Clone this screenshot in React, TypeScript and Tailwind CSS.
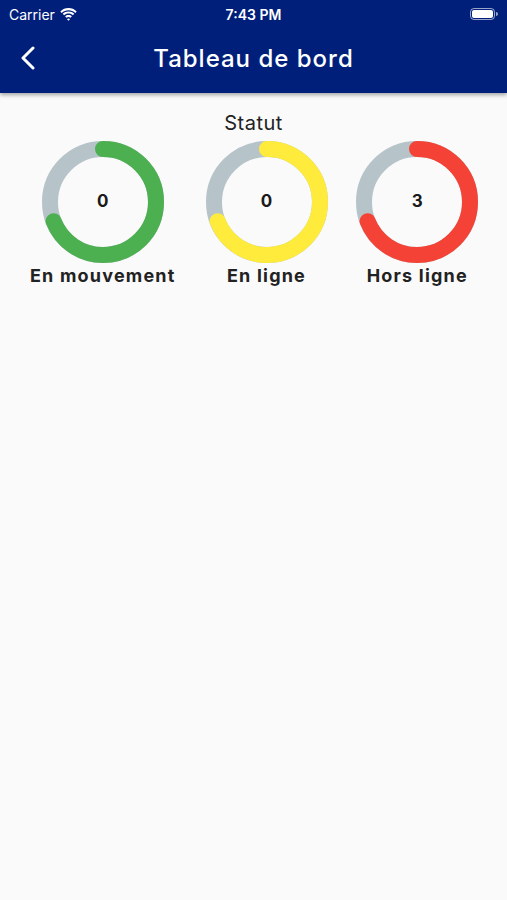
import React from "react";

type Ring = { label: string; value: number; color: string; width: string };

const rings: Ring[] = [
  { label: "En mouvement", value: 0, color: "#4caf50", width: "w-[148px]" },
  { label: "En ligne", value: 0, color: "#ffeb3b", width: "w-[122px]" },
  { label: "Hors ligne", value: 3, color: "#f44336", width: "w-[122px]" },
];

const StatusBar = () => (
  <div className="h-[28px] flex items-center justify-between px-[9px] text-white text-[14px]">
    <div className="flex items-center gap-[5px] w-[120px]">
      <span>Carrier</span>
      <svg width="17" height="13" viewBox="0 0 17 13" fill="white">
        <path d="M8.5 2.2c2.6 0 5 1 6.8 2.7l1.4-1.5C14.5 1.3 11.6.1 8.5.1S2.5 1.3.3 3.4l1.4 1.5C3.5 3.2 5.9 2.2 8.5 2.2z" />
        <path d="M8.5 5.6c1.7 0 3.2.6 4.4 1.7l1.4-1.5C12.8 4.4 10.7 3.5 8.5 3.5S4.2 4.4 2.7 5.8l1.4 1.5C5.3 6.2 6.8 5.6 8.5 5.6z" />
        <path d="M8.5 9c.8 0 1.5.3 2 .8l1.4-1.5C11 7.4 9.8 6.9 8.5 6.9S6 7.4 5.1 8.3l1.4 1.5C7 9.3 7.7 9 8.5 9z" />
        <path d="M8.5 12.8l1.5-1.6c-.4-.4-.9-.6-1.5-.6s-1.1.2-1.5.6z" />
      </svg>
    </div>
    <span className="font-semibold">7:43 PM</span>
    <div className="w-[120px] flex justify-end">
      <div className="flex items-center">
        <div className="w-[25px] h-[12px] rounded-[4px] border border-white/60 p-[1px]">
          <div className="w-full h-full bg-white rounded-[2px]" />
        </div>
        <div className="w-[2px] h-[4px] bg-white/60 rounded-r-sm ml-[1px]" />
      </div>
    </div>
  </div>
);

const Donut = ({ ring }: { ring: Ring }) => {
  const r = 53;
  const c = 2 * Math.PI * r;
  const arc = c * 0.69;
  return (
    <div className={`${ring.width} flex flex-col items-center`}>
      <div className="relative w-[122px] h-[122px]">
        <svg width="122" height="122" viewBox="0 0 122 122">
          <circle cx="61" cy="61" r={r} fill="none" stroke="#b6c4c9" strokeWidth="16" />
          <circle
            cx="61"
            cy="61"
            r={r}
            fill="none"
            stroke={ring.color}
            strokeWidth="16"
            strokeLinecap="round"
            strokeDasharray={`${arc} ${c}`}
            transform="rotate(-90 61 61)"
          />
        </svg>
        <div className="absolute inset-0 flex items-center justify-center text-[17px] font-bold text-[#1a1a1a]">
          {ring.value}
        </div>
      </div>
      <div className="text-[18px] font-bold tracking-[1.2px] text-[#222] whitespace-nowrap leading-[26px]">{ring.label}</div>
    </div>
  );
};

export default function App() {
  return (
    <div className="w-[507px] h-[900px] bg-[#fafafa] font-['Inter','Noto_Sans',sans-serif] overflow-hidden">
      <div className="bg-[#001f7a] shadow-[0_2px_4px_rgba(0,0,0,0.35)] relative z-10">
        <StatusBar />
        <div className="h-[65px] flex items-center relative pb-[4px]">
          <svg className="absolute left-[20px] top-[18px]" width="16" height="24" viewBox="0 0 16 24" fill="none">
            <path d="M13 2L3 12l10 10" stroke="white" strokeWidth="3" strokeLinecap="round" strokeLinejoin="round" />
          </svg>
          <div className="flex-1 text-center text-white text-[24px] font-medium tracking-[1px]">Tableau de bord</div>
        </div>
      </div>
      <div className="pt-[16px] text-center text-[20px] text-[#222] leading-[28px] tracking-[0.5px]">Statut</div>
      <div className="flex justify-evenly mt-[4px]">
        {rings.map((ring) => (
          <Donut key={ring.label} ring={ring} />
        ))}
      </div>
    </div>
  );
}
